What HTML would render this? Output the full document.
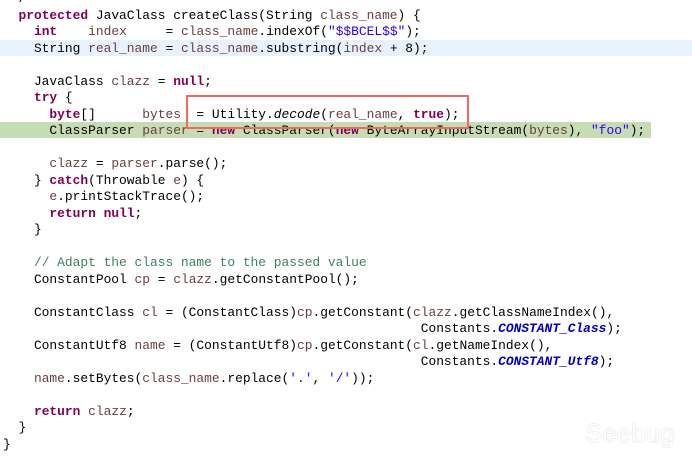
<!DOCTYPE html>
<html><head><style>
body{margin:0;width:692px;height:461px;background:#fff;overflow:hidden;position:relative}
pre{margin:0;position:absolute;left:3px;top:-9px;font:12.9px/16.5px "Liberation Mono",monospace;color:#000}
.l{display:block;height:16.5px;white-space:pre}
.k{color:#7f0055;font-weight:bold}.v{color:#6a3e3e}.s{color:#2a00ff}.c{color:#3f7f5f}.f{color:#0000c0;font-weight:bold;font-style:italic}
.hb{position:absolute;left:0;width:692px;top:40px;height:16px;background:#e8f2fe}
.hg{position:absolute;left:0;width:651px;top:122px;height:16px;background:#c7dcb4}
.box{position:absolute;left:186px;top:95px;width:279px;height:30px;border:2px solid #f06a5e}
.wm{position:absolute;left:585px;top:418px;font:26px "Liberation Sans",sans-serif;color:#fff;text-shadow:0 0 1px #ccc,0 0 1px #ccc}
</style></head><body>
<div class="hb"></div><div class="hg"></div>
<pre><span class="l">  /</span><span class="l">  <span class="k">protected</span> JavaClass createClass(String <span class="v">class_name</span>) {</span><span class="l">    <span class="k">int</span>    <span class="v">index</span>     = <span class="v">class_name</span>.indexOf(<span class="s">"$$BCEL$$"</span>);</span><span class="l">    String <span class="v">real_name</span> = <span class="v">class_name</span>.substring(<span class="v">index</span> + 8);</span><span class="l"> </span><span class="l">    JavaClass <span class="v">clazz</span> = <span class="k">null</span>;</span><span class="l">    <span class="k">try</span> {</span><span class="l">      <span class="k">byte</span>[]      <span class="v">bytes</span>  = Utility.<i>decode</i>(<span class="v">real_name</span>, <span class="k">true</span>);</span><span class="l">      ClassParser <span class="v">parser</span> = <span class="k">new</span> ClassParser(<span class="k">new</span> ByteArrayInputStream(<span class="v">bytes</span>), <span class="s">"foo"</span>);</span><span class="l"> </span><span class="l">      <span class="v">clazz</span> = <span class="v">parser</span>.parse();</span><span class="l">    } <span class="k">catch</span>(Throwable <span class="v">e</span>) {</span><span class="l">      <span class="v">e</span>.printStackTrace();</span><span class="l">      <span class="k">return</span> <span class="k">null</span>;</span><span class="l">    }</span><span class="l"> </span><span class="l">    <span class="c">// Adapt the class name to the passed value</span></span><span class="l">    ConstantPool <span class="v">cp</span> = <span class="v">clazz</span>.getConstantPool();</span><span class="l"> </span><span class="l">    ConstantClass <span class="v">cl</span> = (ConstantClass)<span class="v">cp</span>.getConstant(<span class="v">clazz</span>.getClassNameIndex(),</span><span class="l">                                                      Constants.<span class="f">CONSTANT_Class</span>);</span><span class="l">    ConstantUtf8 <span class="v">name</span> = (ConstantUtf8)<span class="v">cp</span>.getConstant(<span class="v">cl</span>.getNameIndex(),</span><span class="l">                                                      Constants.<span class="f">CONSTANT_Utf8</span>);</span><span class="l">    <span class="v">name</span>.setBytes(<span class="v">class_name</span>.replace(<span class="s">'.'</span>, <span class="s">'/'</span>));</span><span class="l"> </span><span class="l">    <span class="k">return</span> <span class="v">clazz</span>;</span><span class="l">  }</span><span class="l">}</span></pre>
<div class="box"></div>
<div class="wm">Seebug</div>
</body></html>
